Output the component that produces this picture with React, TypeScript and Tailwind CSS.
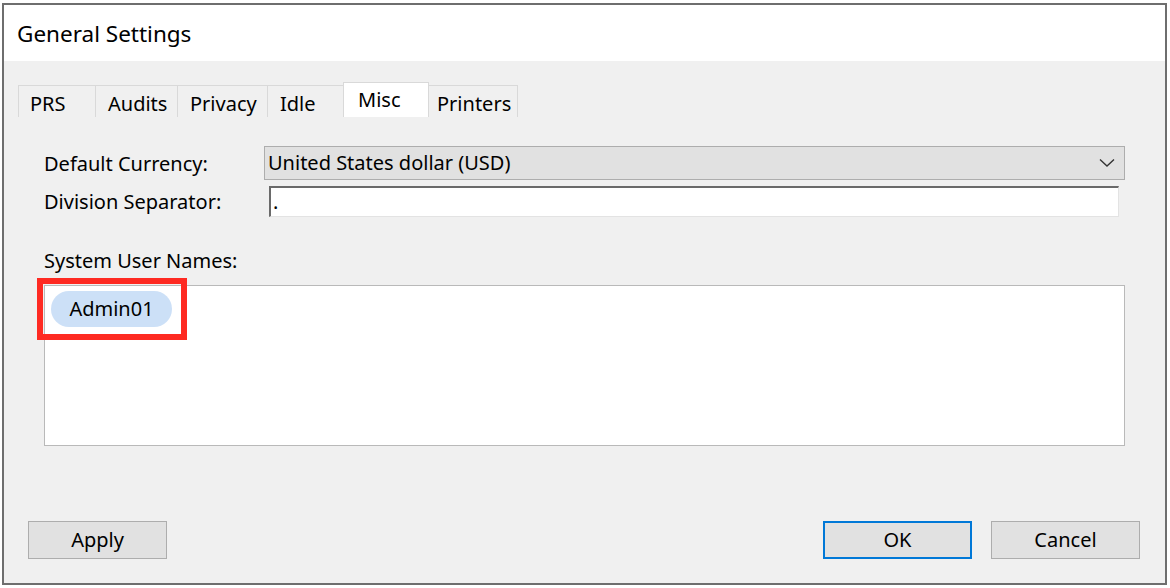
import React from "react";

const font = { fontFamily: '"Noto Sans", "Open Sans", sans-serif' };

function Tab({ label, selected, w, pl }: { label: string; selected?: boolean; w: string; pl: string }) {
  if (selected) {
    return (
      <div className={`${w} ${pl} h-[35px] bg-white border border-b-0 border-[#d9d9d9] -ml-px flex items-start pt-[4px] text-[20px] leading-[26px] text-black z-10`}>
        {label}
      </div>
    );
  }
  return (
    <div className={`${w} ${pl} h-[32px] bg-[#f0f0f0] border border-b-0 border-[#d9d9d9] -ml-px first:ml-0 flex items-start pt-[5px] text-[20px] leading-[26px] text-black`}>
      {label}
    </div>
  );
}

export default function App() {
  return (
    <div className="w-[1170px] h-[588px] bg-white overflow-hidden" style={font}>
      <div className="ml-[2px] mt-[3px] w-[1165px] h-[582px] border-2 border-[#6e6e6e] flex flex-col bg-[#f0f0f0]">
        {/* Title bar */}
        <div className="h-[56px] bg-white flex items-center pl-[13px] pt-[2px] text-[22.5px] text-black">
          General Settings
        </div>
        {/* Body */}
        <div className="flex-1 flex flex-col">
          {/* Tabs */}
          <div className="mt-[21px] pl-[14px] flex items-end h-[35px]">
            <Tab label="PRS" w="w-[78px]" pl="pl-[11px]" />
            <Tab label="Audits" w="w-[83px]" pl="pl-[12px]" />
            <Tab label="Privacy" w="w-[91px]" pl="pl-[12px]" />
            <Tab label="Idle" w="w-[77px]" pl="pl-[12px]" />
            <Tab label="Misc" w="w-[86px]" pl="pl-[14px]" selected />
            <Tab label="Printers" w="w-[90px]" pl="pl-[8px]" />
          </div>

          {/* Form */}
          <div className="pl-[40px] mt-[29px] flex flex-col">
            <div className="flex items-center h-[34px]">
              <div className="w-[220px] text-[20px] text-black pt-[1px]">Default Currency:</div>
              <div className="w-[861px] h-[34px] bg-[#e1e1e1] border border-[#adadad] flex items-center pl-[3px] pr-[8px] justify-between">
                <span className="text-[20px] text-black">United States dollar (USD)</span>
                <svg width="16" height="10" viewBox="0 0 16 10" className="mr-[1px]">
                  <path d="M1 1.5 L8 8 L15 1.5" fill="none" stroke="#333" strokeWidth="1.4" />
                </svg>
              </div>
            </div>
            <div className="flex items-center h-[31px] mt-[6px]">
              <div className="w-[225px] text-[20px] text-black">Division Separator:</div>
              <div className="w-[850px] h-[31px] bg-white border-t-2 border-l-2 border-r border-b border-t-[#6a6a6a] border-l-[#6a6a6a] border-r-[#e3e3e3] border-b-[#e3e3e3] flex items-center pl-[2px] text-[20px] text-black leading-none">
                .
              </div>
            </div>

            <div className="mt-[30px] text-[20px] text-black leading-[28px]">System User Names:</div>

            <div className="relative mt-[10px] w-[1081px] h-[161px] bg-white border border-[#b9b9b9]">
              <div className="absolute left-[6px] top-[5px] w-[121px] h-[36px] rounded-full bg-[#cce0f7] flex items-center justify-center text-[20px] text-black">
                Admin01
              </div>
              <div className="absolute left-[-8px] top-[-8px] w-[150px] h-[62px] border-[6px] border-[#fe2a22]" />
            </div>
          </div>

          {/* Buttons */}
          <div className="mt-[75px] flex items-center pl-[24px] pr-[25px]">
            <button className="w-[139px] h-[38px] bg-[#e1e1e1] border border-[#adadad] text-[20px] text-black">
              Apply
            </button>
            <div className="flex-1" />
            <button className="w-[149px] h-[38px] bg-[#e1e1e1] border-2 border-[#0078d7] text-[20px] text-black">
              OK
            </button>
            <button className="ml-[19px] w-[149px] h-[38px] bg-[#e1e1e1] border border-[#adadad] text-[20px] text-black">
              Cancel
            </button>
          </div>
        </div>
      </div>
    </div>
  );
}
